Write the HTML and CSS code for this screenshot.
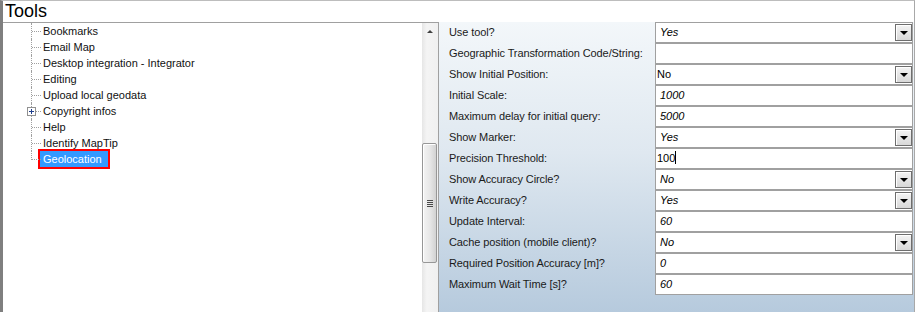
FILE: index.html
```html
<!DOCTYPE html>
<html>
<head>
<meta charset="utf-8">
<link rel="stylesheet" href="styles.css">
</head>
<body>
<div class="frame">
  <div class="title">Tools</div>
  <div class="main">
    <div class="tree-pane">
      <div class="tree">
        <div class="item"><span class="lbl">Bookmarks</span></div>
        <div class="item"><span class="lbl">Email Map</span></div>
        <div class="item"><span class="lbl">Desktop integration - Integrator</span></div>
        <div class="item"><span class="lbl">Editing</span></div>
        <div class="item"><span class="lbl">Upload local geodata</span></div>
        <div class="item exp">
          <svg class="plus" width="9" height="9" viewBox="0 0 9 9"><rect x="0.5" y="0.5" width="8" height="8" fill="#fff" stroke="#919191"/><path d="M2 4.5h5M4.5 2v5" stroke="#1e3e8c" stroke-width="1"/></svg>
          <span class="lbl">Copyright infos</span>
        </div>
        <div class="item"><span class="lbl">Help</span></div>
        <div class="item"><span class="lbl">Identify MapTip</span></div>
        <div class="item last"><span class="lbl sel">Geolocation</span></div>
      </div>
      <div class="vscroll">
        <div class="arrow-up"></div>
        <div class="thumb"><div class="grip"></div></div>
      </div>
    </div>
    <div class="props">
      <div class="row"><div class="label">Use tool?</div><div class="box"><span class="val it">Yes</span><span class="dd"></span></div></div>
      <div class="row"><div class="label">Geographic Transformation Code/String:</div><div class="box"><span class="val"></span></div></div>
      <div class="row"><div class="label">Show Initial Position:</div><div class="box"><span class="val">No</span><span class="dd"></span></div></div>
      <div class="row"><div class="label">Initial Scale:</div><div class="box"><span class="val it num">1000</span></div></div>
      <div class="row"><div class="label">Maximum delay for initial query:</div><div class="box"><span class="val it num">5000</span></div></div>
      <div class="row"><div class="label">Show Marker:</div><div class="box"><span class="val it">Yes</span><span class="dd"></span></div></div>
      <div class="row"><div class="label">Precision Threshold:</div><div class="box"><span class="val">100<span class="caret"></span></span></div></div>
      <div class="row"><div class="label">Show Accuracy Circle?</div><div class="box"><span class="val it">No</span><span class="dd"></span></div></div>
      <div class="row"><div class="label">Write Accuracy?</div><div class="box"><span class="val it">Yes</span><span class="dd"></span></div></div>
      <div class="row"><div class="label">Update Interval:</div><div class="box"><span class="val it num">60</span></div></div>
      <div class="row"><div class="label">Cache position (mobile client)?</div><div class="box"><span class="val it">No</span><span class="dd"></span></div></div>
      <div class="row"><div class="label">Required Position Accuracy [m]?</div><div class="box"><span class="val it num">0</span></div></div>
      <div class="row"><div class="label">Maximum Wait Time [s]?</div><div class="box"><span class="val it num">60</span></div></div>
    </div>
  </div>
</div>
</body>
</html>
```
FILE: styles.css
```css
* { box-sizing: border-box; }
html, body {
  margin: 0;
  padding: 0;
  background: #fff;
  width: 917px;
  height: 312px;
  overflow: hidden;
  font-family: "Liberation Sans", Arial, sans-serif;
  font-size: 11px;
  color: #000;
}
.frame {
  width: 915px;
  height: 312px;
  border-top: 1px solid #bdbdbd;
  border-left: 3px solid #7f7f7f;
  border-right: 1px solid #a8a8a8;
  display: flex;
  flex-direction: column;
}
.title {
  height: 21px;
  line-height: 21px;
  font-size: 18px;
  padding-left: 2px;
  color: #000;
}
.main {
  flex: 1;
  display: flex;
  min-height: 0;
}
.tree-pane {
  display: flex;
  border-top: 1px solid #a0a0a0;
  border-right: 1px solid #a0a0a0;
}
.tree {
  width: 419px;
  background: #fff;
}
.item {
  position: relative;
  height: 16px;
  line-height: 16px;
  padding-left: 37px;
  white-space: nowrap;
  color: #111;
}
.item::before {
  content: "";
  position: absolute;
  left: 28px;
  top: 0;
  height: 16px;
  border-left: 1px dotted #a0a0a0;
}
.item.last::before { height: 9px; }
.item::after {
  content: "";
  position: absolute;
  left: 29px;
  top: 8px;
  width: 9px;
  border-top: 1px dotted #a0a0a0;
}
.item.exp::after { left: 33px; width: 5px; }
.plus {
  position: absolute;
  left: 24px;
  top: 4px;
  z-index: 1;
  display: block;
}
.lbl {
  display: inline-block;
  height: 16px;
  padding: 0 3px;
}
.lbl.sel {
  background: #3399ff;
  color: #fff;
  outline: 2px solid #ff0000;
  padding-right: 6px;
}
.vscroll {
  width: 16px;
  background: linear-gradient(to right, #e6e6e6, #f4f4f4 30%, #f0f0f0);
  padding-top: 7px;
}
.arrow-up {
  width: 0;
  height: 0;
  margin-left: 5px;
  border-left: 3px solid transparent;
  border-right: 3px solid transparent;
  border-bottom: 3px solid #404040;
}
.thumb {
  margin-top: 110px;
  width: 15px;
  height: 120px;
  border: 1px solid #979797;
  border-radius: 2px;
  background: linear-gradient(to right, #f4f4f4, #e8e8e8 50%, #d2d2d2);
  box-shadow: inset 1px 1px 0 #fff;
  display: flex;
  align-items: center;
  justify-content: center;
}
.grip {
  width: 6px;
  height: 7px;
  background: repeating-linear-gradient(to bottom, #4a4a4a 0, #4a4a4a 1px, transparent 1px, transparent 2px);
}
.props {
  width: 475px;
  background: linear-gradient(to bottom, #f3f7fa 0%, #dfe8f0 45%, #b6cadd 100%);
}
.row {
  display: flex;
  height: 21px;
}
.label {
  width: 216px;
  padding-left: 10px;
  line-height: 21px;
  white-space: nowrap;
  color: #1a1a1a;
  letter-spacing: -0.1px;
}
.box {
  width: 258px;
  height: 21px;
  border: 1px solid #a0a0a0;
  background: #fff;
  display: flex;
  align-items: center;
  justify-content: space-between;
}
.val {
  padding-left: 1px;
  line-height: 19px;
  white-space: nowrap;
}
.val.it { font-style: italic; padding-left: 4px; }
.val.num { padding-left: 4px; }
.caret {
  display: inline-block;
  width: 1px;
  height: 13px;
  background: #000;
  vertical-align: -2px;
}
.dd {
  width: 17px;
  height: 17px;
  margin-right: 0;
  border: 1px solid #6e6e6e;
  background: linear-gradient(to bottom, #f4f4f4, #d8d8d8);
  box-shadow: inset 1px 1px 0 #fff;
  display: flex;
  align-items: center;
  justify-content: center;
}
.dd::after {
  content: "";
  width: 0;
  height: 0;
  border-left: 4px solid transparent;
  border-right: 4px solid transparent;
  border-top: 4px solid #000;
}
```
